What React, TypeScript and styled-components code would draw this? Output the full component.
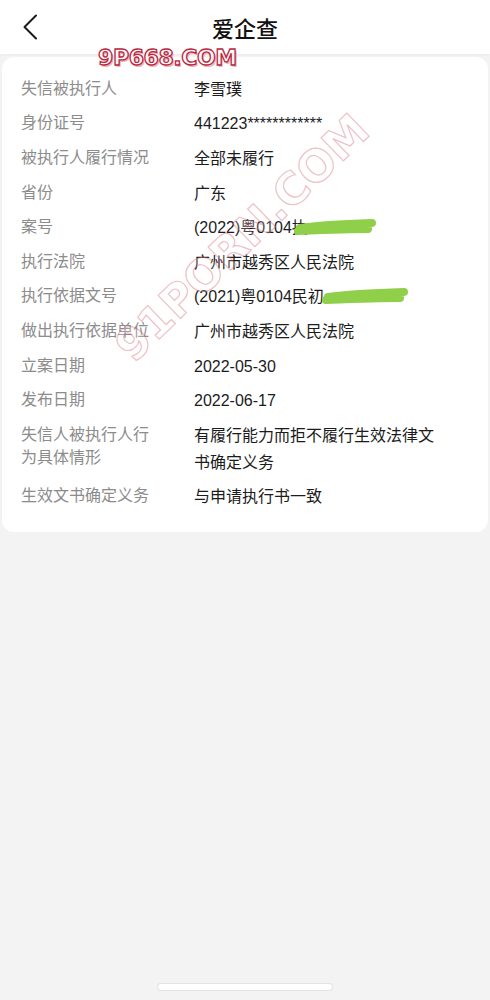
import React from "react";
import styled, { createGlobalStyle } from "styled-components";

const Global = createGlobalStyle`
  html, body { margin: 0; padding: 0; background: #f3f3f3; }
  body { font-family: "Liberation Sans", "Noto Sans CJK SC", sans-serif; }
  * { box-sizing: border-box; }
`;

const Page = styled.div`
  position: relative;
  width: 490px;
  height: 1000px;
  background: #f3f3f3;
  overflow: hidden;
  display: flex;
  flex-direction: column;
`;

const Header = styled.header`
  height: 54px;
  flex: none;
  background: #ffffff;
  display: grid;
  grid-template-columns: 60px 1fr 60px;
  align-items: center;
  box-shadow: 0 1px 2px rgba(0, 0, 0, 0.04);
`;

const BackButton = styled.button`
  border: 0;
  background: none;
  padding: 0 0 0 22px;
  height: 54px;
  display: flex;
  align-items: center;
  cursor: pointer;
`;

const Title = styled.h1`
  margin: 0;
  text-align: center;
  font-family: "Noto Sans CJK SC", sans-serif;
  font-size: 22px;
  font-weight: 500;
  color: #111;
  line-height: 54px;
`;

const Card = styled.section`
  position: relative;
  margin: 3px 2px 0;
  background: #ffffff;
  border-radius: 12px;
  padding: 15px 0 18px 19px;
`;

const Row = styled.div`
  display: grid;
  grid-template-columns: 173px 252px;
  padding: 3.8px 0;
  align-items: start;
`;

const Label = styled.div`
  font-family: "Noto Sans CJK SC", sans-serif;
  font-size: 16px;
  line-height: 23px;
  color: #8c8c8c;
  max-width: 136px;
`;

const Value = styled.div`
  position: relative;
  font-size: 16px;
  line-height: 27px;
  color: #1c1c1c;
`;

const Scribble = styled.svg<{ $left: number }>`
  position: absolute;
  left: ${(p) => p.$left}px;
  top: 7px;
  overflow: visible;
  pointer-events: none;
`;

const Stamp = styled.div`
  position: absolute;
  left: 96px;
  top: -12px;
  font-family: "DejaVu Sans", sans-serif;
  font-weight: 700;
  font-size: 22px;
  letter-spacing: -0.4px;
  color: #fff6f7;
  -webkit-text-stroke: 1.3px #b8283f;
  text-shadow: 1.5px 1.5px 0 #e9b7c0;
  pointer-events: none;
`;

const Diagonal = styled.div`
  position: absolute;
  left: 30px;
  top: 155px;
  width: 420px;
  text-align: center;
  transform: rotate(-44deg);
  font-family: "DejaVu Sans", sans-serif;
  font-weight: 700;
  font-size: 44px;
  letter-spacing: 0px;
  color: rgba(255, 255, 255, 0.2);
  -webkit-text-stroke: 1.2px rgba(214, 90, 110, 0.4);
  pointer-events: none;
`;

const HomeBar = styled.div`
  margin: auto auto 10px;
  width: 174px;
  height: 6px;
  flex: none;
  border-radius: 3px;
  background: #ffffff;
  box-shadow: 0 0 0 1px #e2e2e2;
`;

type Item = { label: string; value: React.ReactNode };

const greenPath = (w: number) =>
  `M2 7 C ${w * 0.3} 4, ${w * 0.6} 3, ${w} 2 M0 10 C ${w * 0.35} 9, ${w * 0.7} 8, ${w - 4} 8`;

const Redact = ({ left, width }: { left: number; width: number }) => (
  <Scribble $left={left} width={width} height={14}>
    <path d={greenPath(width - 2)} stroke="#8fcf4a" strokeWidth={8} strokeLinecap="round" fill="none" />
  </Scribble>
);

const items: Item[] = [
  { label: "失信被执行人", value: "李雪璞" },
  { label: "身份证号", value: "441223************" },
  { label: "被执行人履行情况", value: "全部未履行" },
  { label: "省份", value: "广东" },
  {
    label: "案号",
    value: (
      <>
        (2022)粤0104执
        <Redact left={104} width={76} />
      </>
    ),
  },
  { label: "执行法院", value: "广州市越秀区人民法院" },
  {
    label: "执行依据文号",
    value: (
      <>
        (2021)粤0104民初
        <Redact left={132} width={80} />
      </>
    ),
  },
  { label: "做出执行依据单位", value: "广州市越秀区人民法院" },
  { label: "立案日期", value: "2022-05-30" },
  { label: "发布日期", value: "2022-06-17" },
  { label: "失信人被执行人行为具体情形", value: "有履行能力而拒不履行生效法律文书确定义务" },
  { label: "生效文书确定义务", value: "与申请执行书一致" },
];

export default function App() {
  return (
    <Page>
      <Global />
      <Header>
        <BackButton aria-label="返回">
          <svg width="16" height="26" viewBox="0 0 16 26">
            <path d="M14 1.5 L2.5 13 L14 24.5" stroke="#1a1a1a" strokeWidth="2" fill="none" strokeLinecap="round" strokeLinejoin="round" />
          </svg>
        </BackButton>
        <Title>爱企查</Title>
        <span />
      </Header>
      <Card>
        {items.map((it) => (
          <Row key={it.label}>
            <Label>{it.label}</Label>
            <Value>{it.value}</Value>
          </Row>
        ))}
        <Stamp>9P668.COM</Stamp>
        <Diagonal>91PORN.COM</Diagonal>
      </Card>
      <HomeBar />
    </Page>
  );
}
